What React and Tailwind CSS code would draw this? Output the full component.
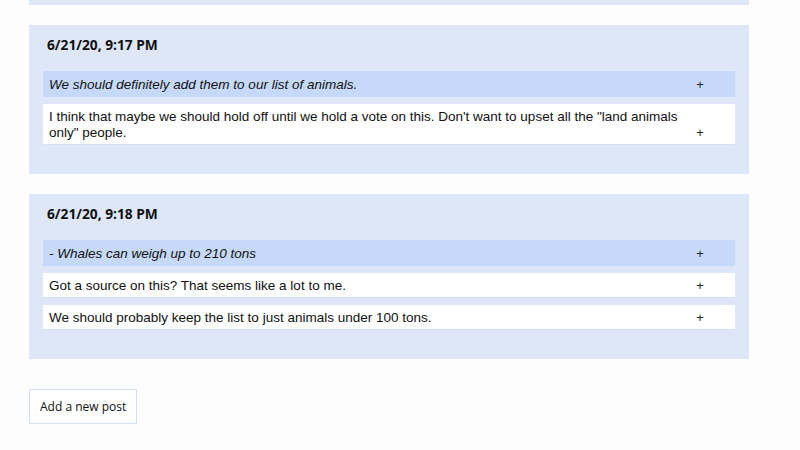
import { useState } from "react";

const posts = [
  {
    id: 2,
    date: "6/21/20, 9:17 PM",
    entries: [
      { id: "a", text: "We should definitely add them to our list of animals.", quote: true },
      {
        id: "b",
        text: 'I think that maybe we should hold off until we hold a vote on this. Don\'t want to upset all the "land animals only" people.',
      },
    ],
  },
  {
    id: 3,
    date: "6/21/20, 9:18 PM",
    entries: [
      { id: "c", text: "- Whales can weigh up to 210 tons", quote: true },
      { id: "d", text: "Got a source on this? That seems like a lot to me." },
      { id: "e", text: "We should probably keep the list to just animals under 100 tons." },
    ],
  },
];

function Entry({ entry }) {
  return (
    <div
      className={
        entry.quote
          ? "flex items-end bg-[#c6d9f8] pl-[6px] pr-[31px] pt-[6px] pb-[4px]"
          : "flex items-end bg-white pl-[6px] pr-[31px] pt-[5px] pb-[3px] border-b border-[#d3e0f6]"
      }
    >
      <p className={entry.quote ? "flex-1 italic pr-3" : "flex-1 pr-3"}>{entry.text}</p>
      <button className="w-[8px] text-[13px] leading-4 text-[#222]">+</button>
    </div>
  );
}

function Post({ post }) {
  return (
    <div className="bg-[#dde7f8] px-[14px] pt-[12px] pb-[29px]">
      <h2 className="font-['Open_Sans',sans-serif] font-bold text-[13.75px] leading-4 pl-[4px]">{post.date}</h2>
      <div className="mt-[18px] flex flex-col gap-[7px]">
        {post.entries.map((e) => (
          <Entry key={e.id} entry={e} />
        ))}
      </div>
    </div>
  );
}

export default function App() {
  const [count] = useState(posts.length);

  return (
    <div className="min-h-[450px] bg-[#fdfdfe] text-[#111] font-['Liberation_Sans',Arial,sans-serif] text-[13.5px] leading-4">
      <div className="w-[720px] ml-[29px] flex flex-col gap-[20px]">
        {/* tail of the previous post, scrolled off */}
        <div className="h-[5px] bg-[#dde7f8]" />
        {posts.slice(0, count).map((p) => (
          <Post key={p.id} post={p} />
        ))}
      </div>
      <button className="block ml-[29px] mt-[30px] h-[35px] px-[10px] bg-white border border-[#d5e0f5] font-['Open_Sans',sans-serif] text-[12px] text-[#111]">
        Add a new post
      </button>
    </div>
  );
}
